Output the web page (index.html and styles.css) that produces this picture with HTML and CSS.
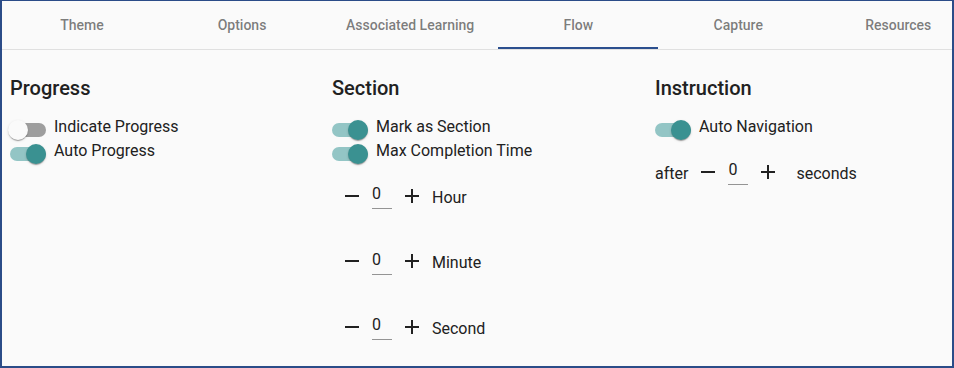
FILE: index.html
```html
<!DOCTYPE html>
<html>
<head>
<meta charset="utf-8">
<link rel="stylesheet" href="styles.css">
</head>
<body>
<div class="frame">
  <nav class="tabs">
    <div class="tab">Theme</div>
    <div class="tab">Options</div>
    <div class="tab">Associated Learning</div>
    <div class="tab active">Flow</div>
    <div class="tab">Capture</div>
    <div class="tab">Resources</div>
  </nav>
  <main class="cols">
    <section class="col">
      <h2 class="heading">Progress</h2>
      <div class="toggle-row"><span class="toggle"><span class="track"></span><span class="thumb"></span></span><span class="label">Indicate Progress</span></div>
      <div class="toggle-row"><span class="toggle on"><span class="track"></span><span class="thumb"></span></span><span class="label">Auto Progress</span></div>
    </section>
    <section class="col">
      <h2 class="heading">Section</h2>
      <div class="toggle-row"><span class="toggle on"><span class="track"></span><span class="thumb"></span></span><span class="label">Mark as Section</span></div>
      <div class="toggle-row"><span class="toggle on"><span class="track"></span><span class="thumb"></span></span><span class="label">Max Completion Time</span></div>
      <div class="num-row">
        <button class="icon-btn" aria-label="decrease"><svg viewBox="0 0 24 24"><path d="M19 13H5v-2h14v2z"/></svg></button>
        <input class="num" type="text" value="0">
        <button class="icon-btn" aria-label="increase"><svg viewBox="0 0 24 24"><path d="M19 13h-6v6h-2v-6H5v-2h6V5h2v6h6v2z"/></svg></button>
        <span class="num-label">Hour</span>
      </div>
      <div class="num-row">
        <button class="icon-btn" aria-label="decrease"><svg viewBox="0 0 24 24"><path d="M19 13H5v-2h14v2z"/></svg></button>
        <input class="num" type="text" value="0">
        <button class="icon-btn" aria-label="increase"><svg viewBox="0 0 24 24"><path d="M19 13h-6v6h-2v-6H5v-2h6V5h2v6h6v2z"/></svg></button>
        <span class="num-label">Minute</span>
      </div>
      <div class="num-row">
        <button class="icon-btn" aria-label="decrease"><svg viewBox="0 0 24 24"><path d="M19 13H5v-2h14v2z"/></svg></button>
        <input class="num" type="text" value="0">
        <button class="icon-btn" aria-label="increase"><svg viewBox="0 0 24 24"><path d="M19 13h-6v6h-2v-6H5v-2h6V5h2v6h6v2z"/></svg></button>
        <span class="num-label">Second</span>
      </div>
    </section>
    <section class="col">
      <h2 class="heading">Instruction</h2>
      <div class="toggle-row"><span class="toggle on"><span class="track"></span><span class="thumb"></span></span><span class="label">Auto Navigation</span></div>
      <div class="num-row">
        <span class="num-label">after</span>
        <button class="icon-btn" aria-label="decrease"><svg viewBox="0 0 24 24"><path d="M19 13H5v-2h14v2z"/></svg></button>
        <input class="num" type="text" value="0">
        <button class="icon-btn" aria-label="increase"><svg viewBox="0 0 24 24"><path d="M19 13h-6v6h-2v-6H5v-2h6V5h2v6h6v2z"/></svg></button>
        <span class="num-label spaced">seconds</span>
      </div>
    </section>
  </main>
</div>
</body>
</html>
```
FILE: styles.css
```css
* { box-sizing: border-box; }
html, body { margin: 0; padding: 0; background: #fafafa; }
body { font-family: Roboto, "Liberation Sans", sans-serif; color: #212121; }

.frame {
  width: 954px;
  height: 368px;
  border: 2px solid #2b4c88;
  border-top-width: 1px;
  background: #fafafa;
  overflow: hidden;
}

.tabs {
  display: flex;
  height: 49px;
  border-bottom: 1px solid #e0e0e0;
  overflow: hidden;
}
.tab {
  flex: none;
  min-width: 160px;
  height: 48px;
  padding: 0 24px;
  display: flex;
  align-items: center;
  justify-content: center;
  font-size: 14px;
  font-weight: 500;
  color: rgba(0,0,0,.52);
  white-space: nowrap;
  border-bottom: 2px solid transparent;
  padding-top: 2px;
}
.tab.active { border-bottom-color: #2b4f8e; }

.cols {
  display: grid;
  grid-template-columns: 322px 323px 1fr;
  padding: 26px 0 0 8px;
}
.col { display: flex; flex-direction: column; }

.heading {
  margin: 0 0 15px;
  font-size: 20px;
  line-height: 24px;
  font-weight: 500;
  color: #212121;
}

.toggle-row {
  display: flex;
  align-items: center;
  height: 24px;
  font-size: 16px;
}
.toggle {
  flex: none;
  width: 36px;
  height: 20px;
  margin-right: 8px;
  margin-top: 5px;
  display: flex;
  align-items: center;
}
.track {
  display: block;
  width: 36px;
  height: 14px;
  border-radius: 7px;
  background: #9e9e9e;
}
.thumb {
  display: block;
  width: 20px;
  height: 20px;
  border-radius: 50%;
  background: #fafafa;
  margin-left: -38px;
  box-shadow: 0 2px 1px -1px rgba(0,0,0,.2), 0 1px 1px 0 rgba(0,0,0,.14), 0 1px 3px 0 rgba(0,0,0,.12);
}
.toggle.on .track { background: #93c5c5; }
.toggle.on .thumb { background: #3a9191; margin-left: -20px; }

.label { line-height: 24px; }

.num-row {
  display: flex;
  align-items: center;
  height: 65.5px;
  font-size: 16px;
}
.icon-btn {
  flex: none;
  width: 40px;
  height: 40px;
  padding: 8px;
  border: 0;
  background: transparent;
  display: flex;
  align-items: center;
  justify-content: center;
}
.icon-btn svg { width: 24px; height: 24px; fill: #212121; display: block; }

.num {
  flex: none;
  width: 20px;
  height: 20px;
  box-sizing: content-box;
  padding: 0 0 4px;
  margin-top: 2px;
  border: 0;
  border-bottom: 1px solid #949494;
  background: transparent;
  font-family: Roboto, "Liberation Sans", sans-serif;
  font-size: 16px;
  line-height: 20px;
  color: #212121;
  outline: none;
}
.num-label {
  line-height: 24px;
  padding-top: 4px;
}
.num-label.spaced { margin-left: 8px; }
```
